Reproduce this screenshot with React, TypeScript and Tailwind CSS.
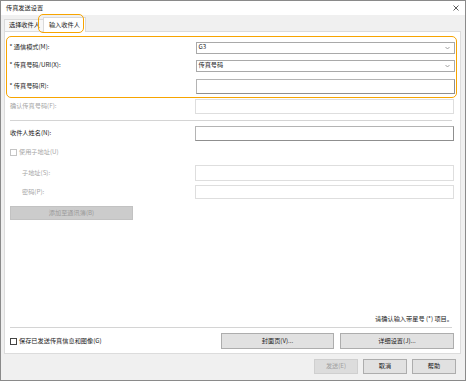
import React from "react";

function Chevron() {
  return (
    <svg width="5" height="4" viewBox="0 0 5 4" className="shrink-0">
      <path d="M0.5 1 L2.5 3 L4.5 1" fill="none" stroke="#8a8a8a" strokeWidth="0.8" />
    </svg>
  );
}

function Select({ value }: { value: string }) {
  return (
    <div className="w-[259px] h-[12px] bg-white border border-[#a9a9a9] flex items-center justify-between pl-[2px] pr-[4px]">
      <span>{value}</span>
      <Chevron />
    </div>
  );
}

function Field({ disabled, h = "h-[15px]" }: { disabled?: boolean; h?: string }) {
  return (
    <div
      className={
        "w-[259px] bg-white border " +
        h +
        (disabled ? " border-[#dedede]" : " border-[#b4b4b4] border-r-[#8f8f8f] border-b-[#8f8f8f]")
      }
    />
  );
}

function Box({ disabled }: { disabled?: boolean }) {
  return (
    <span
      className={
        "w-[7px] h-[7px] shrink-0 bg-white border " + (disabled ? "border-[#c4c4c4]" : "border-[#444]")
      }
    />
  );
}

export default function App() {
  return (
    <div className="w-[466px] h-[381px] bg-[#f0f0f0] border border-[#8a8a8a] flex flex-col overflow-hidden text-[6.2px] leading-none text-[#1a1a1a] font-['Noto_Sans_CJK_SC','Noto_Sans',sans-serif]">
      {/* Title bar */}
      <div className="h-[14px] shrink-0 bg-white flex items-center justify-between pl-[5px] pr-[6px]">
        <span>传真发送设置</span>
        <svg width="6" height="6" viewBox="0 0 6 6">
          <path d="M0.5 0.5 L5.5 5.5 M5.5 0.5 L0.5 5.5" stroke="#333" strokeWidth="0.8" />
        </svg>
      </div>

      {/* Tabs */}
      <div className="relative h-[16px] shrink-0 flex items-end pl-[3px]">
        <div className="h-[12px] pl-[4px] pr-[3px] flex items-center bg-[#f7f7f7] border-t border-l border-[#dadada]">
          选择收件人
        </div>
        <div className="relative z-10 h-[15px] -mb-px px-[5px] flex items-center bg-white border border-b-0 border-[#dadada]">
          输入收件人
        </div>
        <div className="absolute left-[37px] top-[-1px] w-[46px] h-[19px] border-[1.5px] border-[#f7a400] rounded-[5px] z-20" />
      </div>

      {/* Panel */}
      <div className="ml-[3px] w-[457px] h-[323px] shrink-0 bg-white border border-[#dcdcdc] flex flex-col pl-[5px] pr-[6px] pb-[4px]">
        <div className="mt-[4px] -ml-[4px] -mr-[3px] border-[1.5px] border-[#f7a400] rounded-[5px] pt-[4.5px] pb-[3px] pl-[2.5px] pr-[1.5px]">
          <div className="flex items-center justify-between">
            <span>* 通信模式(M):</span>
            <Select value="G3" />
          </div>
          <div className="mt-[6px] flex items-center justify-between">
            <span>* 传真号码/URI(X):</span>
            <Select value="传真号码" />
          </div>
          <div className="mt-[7px] flex items-center justify-between">
            <span>* 传真号码(R):</span>
            <Field />
          </div>
        </div>

        <div className="mt-[1px] flex items-center justify-between text-[#a6a6a6]">
          <span>确认传真号码(F):</span>
          <Field disabled />
        </div>

        <div className="mt-[6px] mr-[2px] h-px bg-[#d4d4d4]" />

        <div className="mt-[5.5px] flex items-center justify-between">
          <span>收件人姓名(N):</span>
          <Field />
        </div>

        <div className="mt-[7px] h-[9px] flex items-center gap-[2px] text-[#a6a6a6]">
          <Box disabled />
          <span>使用子地址(U)</span>
        </div>

        <div className="mt-[8px] flex items-center justify-between text-[#a6a6a6]">
          <span className="pl-[12px]">子地址(S):</span>
          <Field disabled h="h-[16px]" />
        </div>
        <div className="mt-[4px] flex items-center justify-between text-[#a6a6a6]">
          <span className="pl-[12px]">密码(P):</span>
          <Field disabled h="h-[14px]" />
        </div>

        <div className="mt-[7px] w-[123px] h-[14px] flex items-center justify-center bg-[#cccccc] border border-[#c2c2c2] text-[#9a9a9a]">
          添加至通讯簿(B)
        </div>

        <div className="flex-1" />

        <div className="text-right pr-[1px] h-[8px] flex items-center justify-end">
          请确认输入带星号 (*) 项目。
        </div>
        <div className="mt-[4px] mr-[2px] h-px bg-[#d4d4d4]" />

        <div className="mt-[5px] flex items-center justify-between">
          <div className="flex items-center gap-[2px]">
            <Box />
            <span>保存已发送传真信息和图像(G)</span>
          </div>
          <div className="flex gap-[6px]">
            <button className="w-[113px] h-[16px] bg-[#e1e1e1] border border-[#adadad]">封面页(V)...</button>
            <button className="w-[114px] h-[16px] bg-[#e1e1e1] border border-[#adadad]">详细设置(J)...</button>
          </div>
        </div>
      </div>

      {/* Footer */}
      <div className="mt-[5px] flex justify-end gap-[5px] pr-[9px]">
        <button className="w-[44px] h-[15px] bg-[#dcdcdc] border border-[#cfcfcf] text-[#a0a0a0]">发送(E)</button>
        <button className="w-[44px] h-[15px] bg-[#e1e1e1] border border-[#adadad]">取消</button>
        <button className="w-[44px] h-[15px] bg-[#e1e1e1] border border-[#adadad]">帮助</button>
      </div>
    </div>
  );
}
